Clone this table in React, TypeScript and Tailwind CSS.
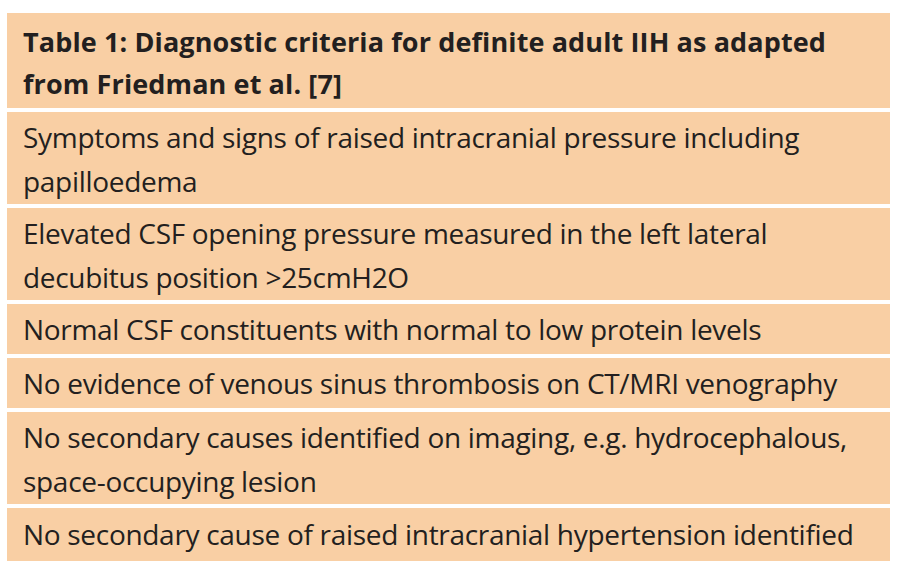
const rows: string[][] = [
  ["Symptoms and signs of raised intracranial pressure including", "papilloedema"],
  ["Elevated CSF opening pressure measured in the left lateral", "decubitus position >25cmH2O"],
  ["Normal CSF constituents with normal to low protein levels"],
  ["No evidence of venous sinus thrombosis on CT/MRI venography"],
  ["No secondary causes identified on imaging, e.g. hydrocephalous,", "space-occupying lesion"],
  ["No secondary cause of raised intracranial hypertension identified"],
]

const App = () => {
  return (
    <div className="w-[900px] h-[572px] bg-white pt-[13px] pl-[7px]">
      <div
        className="w-[883px] flex flex-col gap-[4px] text-[#231f20]"
        style={{ fontFamily: '"Open Sans", "Liberation Sans", sans-serif' }}
      >
        <div className="bg-[#f9cfa4] h-[95px] pl-[16px] pt-[8px] text-[27px] leading-[42px] font-bold tracking-[0.12px]">
          <div>Table 1: Diagnostic criteria for definite adult IIH as adapted</div>
          <div>from Friedman et al. [7]</div>
        </div>
        {rows.map((lines, i) => (
          <div
            key={i}
            className={
              lines.length > 1
                ? "bg-[#f9cfa4] h-[92px] pl-[16px] pt-[3px] text-[28px] leading-[44px] tracking-[-0.3px]"
                : i === rows.length - 1
                  ? "bg-[#f9cfa4] h-[53px] pl-[16px] pt-[4px] text-[28px] leading-[44px] tracking-[-0.3px]"
                  : "bg-[#f9cfa4] h-[50px] pl-[16px] pt-[3px] text-[28px] leading-[44px] tracking-[-0.3px]"
            }
          >
            {lines.map((l, j) => (
              <div key={j}>{l}</div>
            ))}
          </div>
        ))}
      </div>
    </div>
  )
}

export default App
